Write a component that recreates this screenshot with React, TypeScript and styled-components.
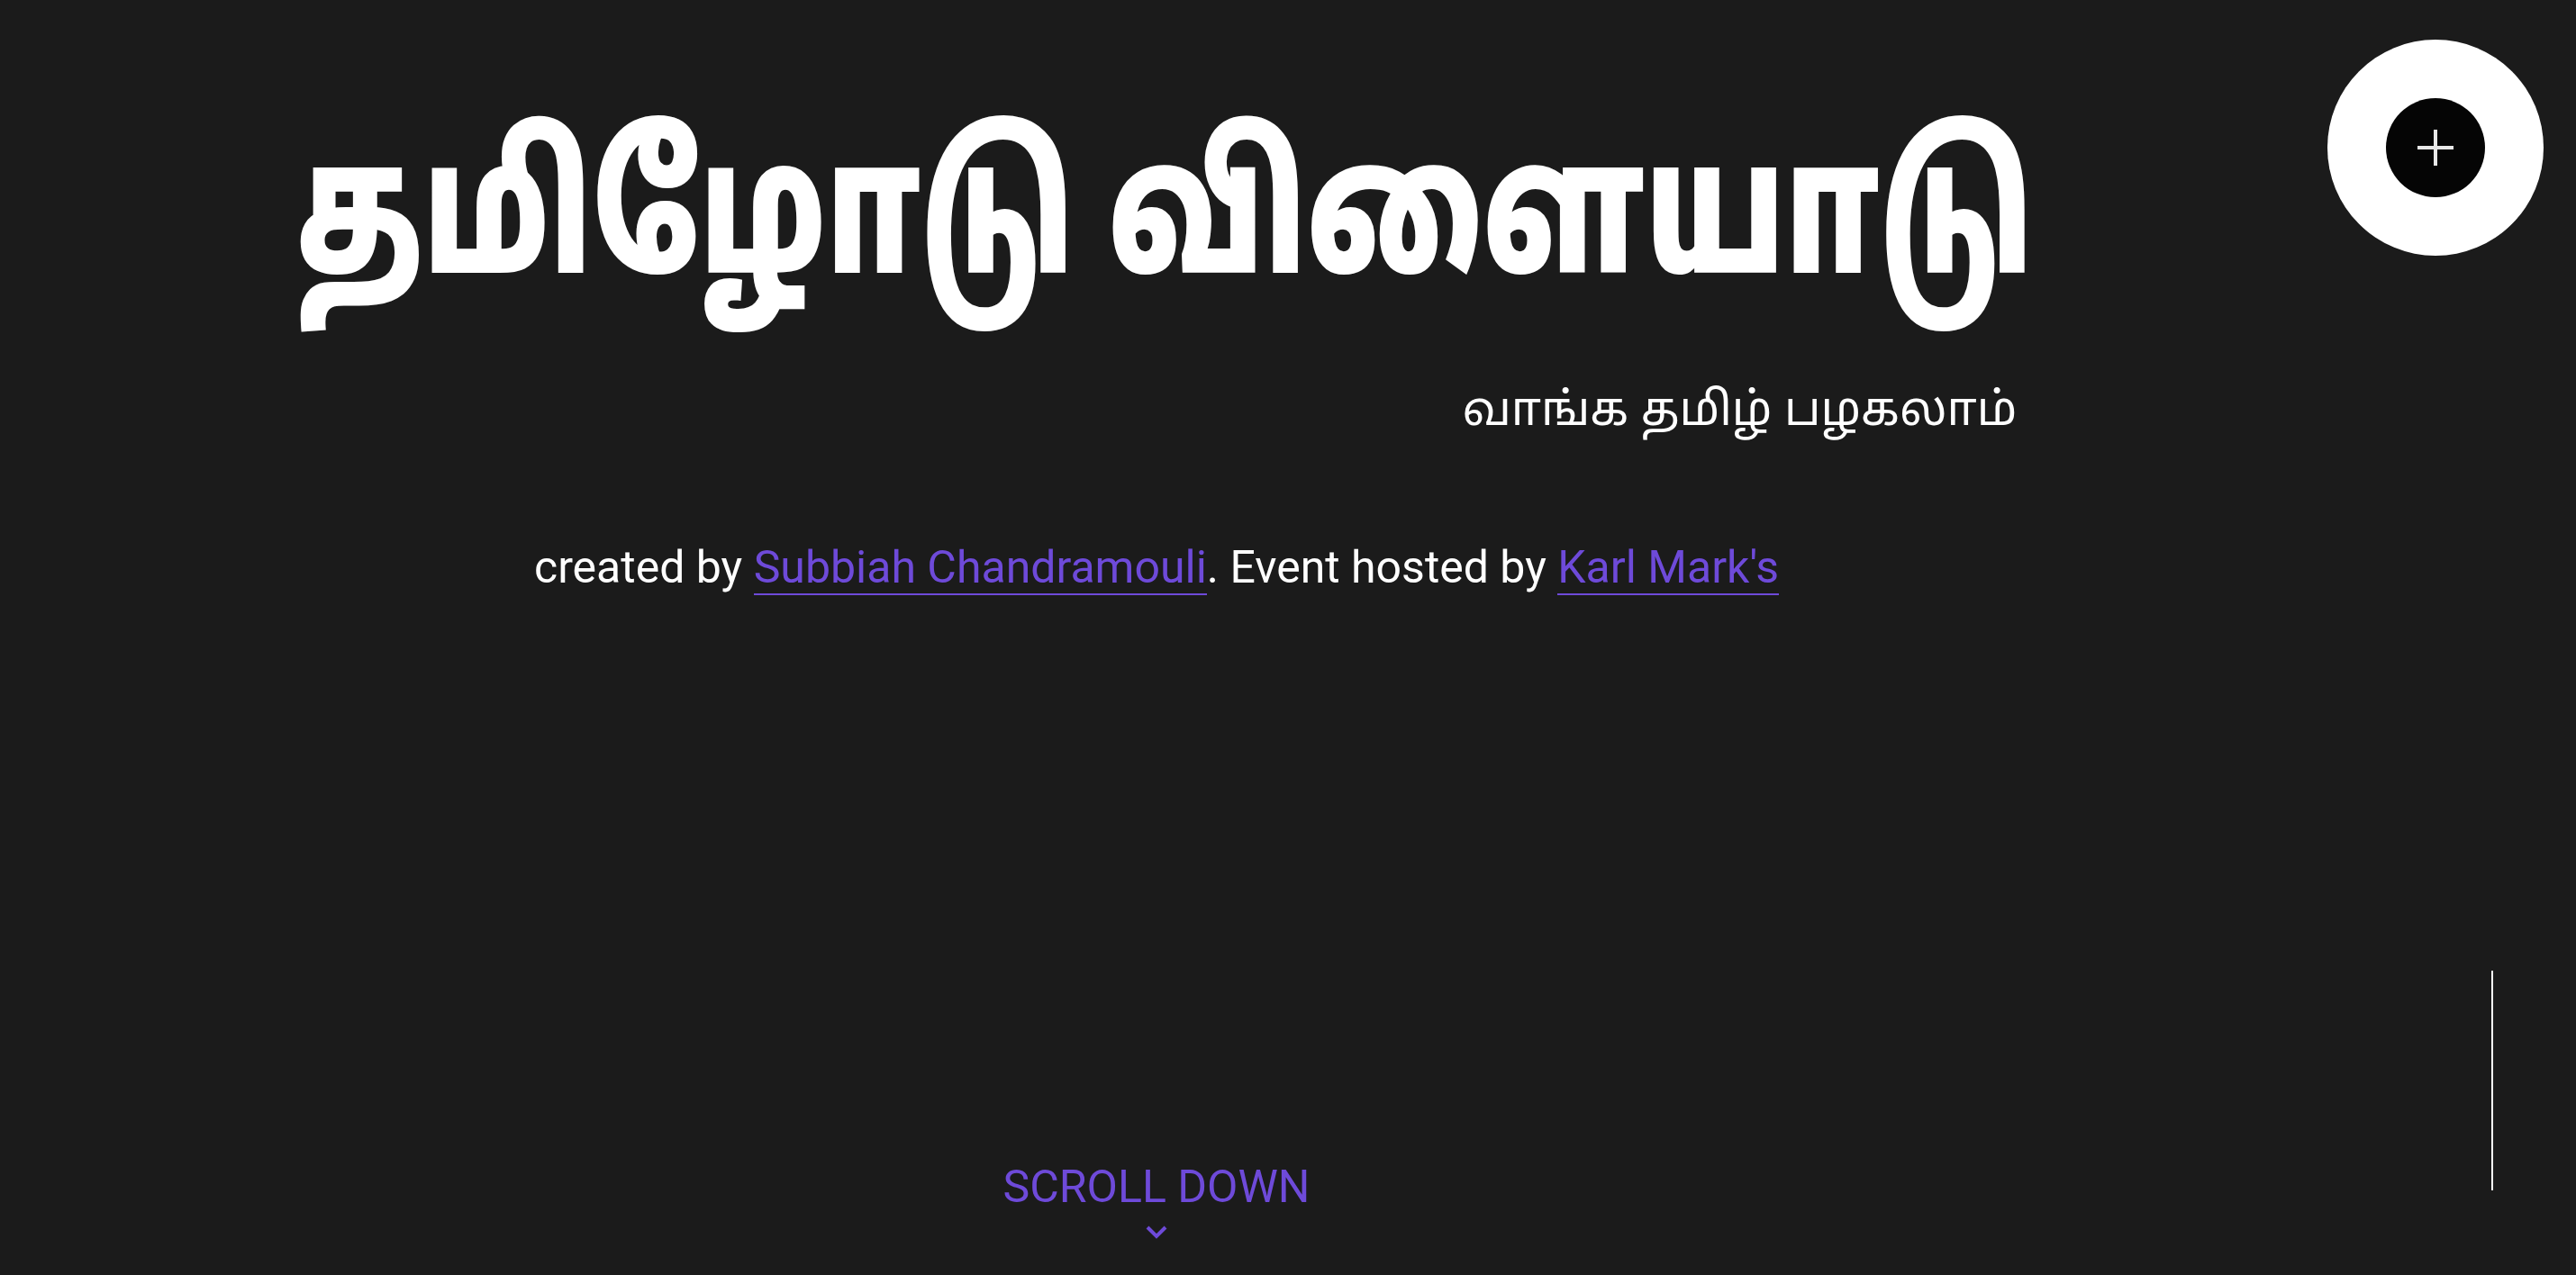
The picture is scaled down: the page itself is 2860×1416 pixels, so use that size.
import styled, { createGlobalStyle } from 'styled-components'

const accent = '#6e4ad9'

const GlobalStyle = createGlobalStyle`
  html, body {
    margin: 0;
    padding: 0;
    background-color: #1b1b1b;
    font-family: Roboto, 'Noto Sans', sans-serif;
  }
`

const Page = styled.div`
  display: grid;
  grid-template-columns: 1fr 292px;
  height: 100vh;
  background-color: #1b1b1b;
  color: #ffffff;
`

const Hero = styled.main`
  display: flex;
  flex-direction: column;
  align-items: center;
  padding-top: 150px;
  padding-bottom: 40px;
`

const TitleBlock = styled.div`
  display: flex;
  flex-direction: column;
  align-items: flex-end;
`

const Title = styled.h1`
  margin: 0;
  width: 1911px;
  white-space: nowrap;
  font-family: 'Noto Sans Tamil', 'Noto Sans', sans-serif;
  font-size: 205px;
  font-weight: 900;
  line-height: 1;
  transform: scaleX(0.707);
  transform-origin: left center;
`

const Subtitle = styled.p`
  margin: 68px 0 0;
  font-family: 'Noto Sans Tamil', 'Noto Sans', sans-serif;
  font-size: 52px;
  font-weight: 400;
  line-height: 1.4;
`

const Credits = styled.p`
  margin: 104px 0 0;
  font-size: 50px;
  font-weight: 400;
  line-height: 1.2;
`

const Link = styled.a`
  color: ${accent};
  text-decoration: none;
  border-bottom: 2px solid ${accent};
`

const ScrollDown = styled.div`
  margin-top: auto;
  display: flex;
  flex-direction: column;
  align-items: center;
  gap: 13px;
  color: ${accent};
  font-size: 50px;
  line-height: 1.2;
`

const Side = styled.aside`
  display: flex;
  flex-direction: column;
  justify-content: space-between;
  padding: 44px 36px 94px 16px;
`

const AddButton = styled.button`
  align-self: flex-end;
  width: 240px;
  height: 240px;
  border: none;
  border-radius: 50%;
  background-color: #ffffff;
  display: flex;
  align-items: center;
  justify-content: center;
  padding: 0;
  cursor: pointer;
`

const AddInner = styled.span`
  width: 110px;
  height: 110px;
  border-radius: 50%;
  background-color: #050505;
  display: flex;
  align-items: center;
  justify-content: center;
`

const SideLine = styled.div`
  align-self: flex-end;
  margin-right: 56px;
  width: 2px;
  height: 244px;
  background-color: #ffffff;
`

export default function App() {
  return (
    <>
      <GlobalStyle />
      <Page>
        <Hero>
          <TitleBlock>
            <Title>தமிழோடு விளையாடு</Title>
            <Subtitle>வாங்க தமிழ் பழகலாம்</Subtitle>
          </TitleBlock>
          <Credits>
            created by <Link href="#">Subbiah Chandramouli</Link>. Event hosted by{' '}
            <Link href="#">Karl Mark's</Link>
          </Credits>
          <ScrollDown>
            SCROLL DOWN
            <svg width="24" height="15" viewBox="0 0 24 15" fill="none">
              <polyline points="2,2 12,12 22,2" stroke={accent} strokeWidth="4" />
            </svg>
          </ScrollDown>
        </Hero>
        <Side>
          <AddButton aria-label="add">
            <AddInner>
              <svg width="40" height="40" viewBox="0 0 40 40">
                <path d="M20 0v40M0 20h40" stroke="#e8e8e8" strokeWidth="4" />
              </svg>
            </AddInner>
          </AddButton>
          <SideLine />
        </Side>
      </Page>
    </>
  )
}
